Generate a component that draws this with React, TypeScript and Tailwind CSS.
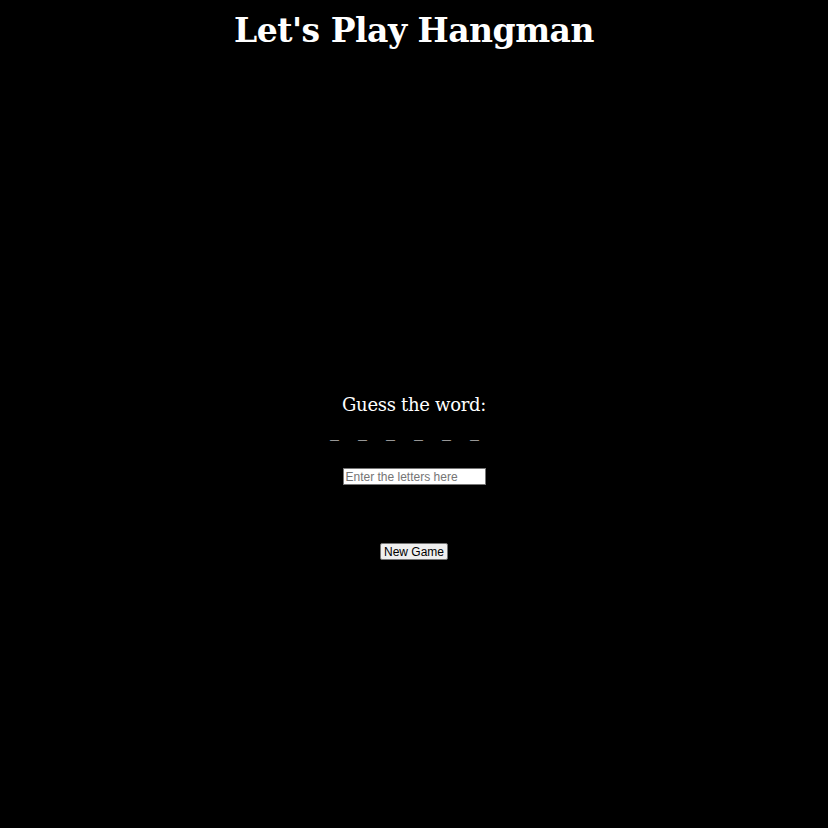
import { useState } from 'react';

const WORD_LENGTH = 6;

export default function App() {
  const [guess, setGuess] = useState('');
  const blanks = Array.from({ length: WORD_LENGTH }, () => '_');

  return (
    <div className="min-h-[828px] bg-black text-white flex flex-col items-center">
      <h1 className="mt-[8px] text-[33px] leading-[46px] font-bold tracking-[-0.5px] font-['DejaVu_Serif',serif]">
        Let's Play Hangman
      </h1>

      <div className="h-[338px] w-[300px]" />

      <div className="flex flex-col items-center">
        <p className="text-[18px] leading-[26px] font-['DejaVu_Serif',serif] tracking-[-0.3px]">Guess the word:</p>
        <div className="mt-[2px] flex gap-[19px] pr-[19px] text-[18px] leading-[20px] font-['DejaVu_Serif',serif]">
          {blanks.map((b, i) => (
            <span key={i}>{b}</span>
          ))}
        </div>

        <input
          value={guess}
          onChange={e => setGuess(e.target.value)}
          placeholder="Enter the letters here"
          className="mt-[28px] w-[143px] h-[17px] bg-white text-black border border-[#767676] px-[2px] text-[12px] font-['Liberation_Sans',Arial,sans-serif] placeholder:text-[#757575] outline-none"
        />

        <button className="mt-[58px] h-[17px] px-[3px] bg-[#efefef] text-black border border-[#767676] rounded-[2px] text-[12px] leading-[14px] font-['Liberation_Sans',Arial,sans-serif]">
          New Game
        </button>
      </div>
    </div>
  );
}
